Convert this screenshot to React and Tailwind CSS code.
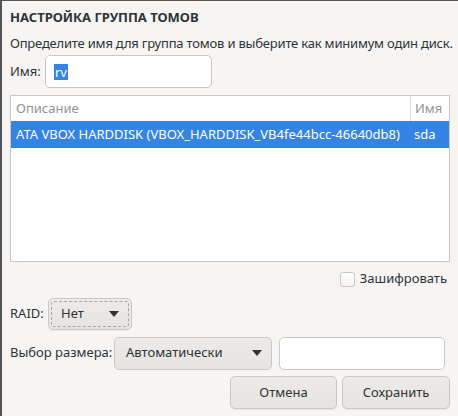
import React from "react";

const font = { fontFamily: '"Noto Sans", "Open Sans", sans-serif' };

function Arrow() {
  return (
    <svg width="10" height="6" viewBox="0 0 10 6" className="shrink-0">
      <path d="M0 0 L10 0 L5 6 Z" fill="#2e3436" />
    </svg>
  );
}

export default function App() {
  return (
    <div
      className="w-[458px] h-[416px] overflow-hidden bg-[#f6f5f4] border-l-2 border-t border-[#555555] text-[#2e3436] text-[13px]"
      style={font}
    >
      <div className="pl-[8px] pr-[8px] flex flex-col">
        <h1 className="mt-[6px] text-[13px] leading-[20px] font-bold whitespace-nowrap">
          НАСТРОЙКА ГРУППА ТОМОВ
        </h1>
        <p className="mt-[7px] leading-[18px] whitespace-nowrap tracking-[-0.2px]">
          Определите имя для группа томов и выберите как минимум один диск.
        </p>

        <div className="mt-[3px] flex items-center h-[33px]">
          <span className="w-[35px]">Имя:</span>
          <div className="w-[167px] h-[33px] rounded-[5px] border border-[#cdc7c2] bg-white flex items-center pl-[8px]">
            <span className="bg-[#3584e4] text-white leading-[16px] px-[1px]">rv</span>
          </div>
        </div>

        <div className="mt-[7px] w-[440px] h-[167px] border border-[#cdc7c2] bg-white flex flex-col">
          <div className="flex h-[25px] items-center text-[#919293]">
            <div className="flex-1 pl-[5px]">Описание</div>
            <div className="w-[39px] h-full border-l border-[#dcd8d5] flex items-center pl-[4px]">Имя</div>
          </div>
          <div className="flex h-[27px] items-center bg-[#3584e4] text-white">
            <div className="flex-1 pl-[5px] whitespace-nowrap">
              ATA VBOX HARDDISK (VBOX_HARDDISK_VB4fe44bcc-46640db8)
            </div>
            <div className="w-[39px] pl-[4px]">sda</div>
          </div>
        </div>

        <div className="mt-[8px] flex justify-end items-center h-[18px] pr-[3px]">
          <div className="w-[15px] h-[15px] rounded-[3px] border border-[#cdc7c2] bg-gradient-to-b from-white to-[#f4f3f2]" />
          <span className="ml-[5px] text-[13px]">Зашифровать</span>
        </div>

        <div className="mt-[9px] flex items-center h-[33px]">
          <span className="w-[38px]">RAID:</span>
          <div className="w-[84px] h-[32px] rounded-[5px] border border-[#cdc7c2] bg-gradient-to-b from-[#edebe9] to-[#e6e3e0] shadow-[0_1px_0_rgba(0,0,0,0.05)] p-[2px]">
            <div className="w-full h-full rounded-[3px] border border-dashed border-[#a9a7a4] flex items-center justify-between pl-[9px] pr-[9px]">
              <span>Нет</span>
              <Arrow />
            </div>
          </div>
        </div>

        <div className="mt-[6px] flex items-center h-[34px]">
          <span className="w-[104px]">Выбор размера:</span>
          <div className="w-[158px] h-[33px] rounded-[5px] border border-[#cdc7c2] bg-gradient-to-b from-[#edebe9] to-[#e6e3e0] flex items-center justify-between pl-[11px] pr-[9px]">
            <span>Автоматически</span>
            <Arrow />
          </div>
          <div className="ml-[7px] w-[166px] h-[33px] rounded-[5px] border border-[#cdc7c2] bg-white" />
        </div>

        <div className="mt-[6px] flex justify-end gap-[5px]">
          <button className="w-[107px] h-[33px] rounded-[5px] border border-[#cdc7c2] bg-gradient-to-b from-[#edebe9] to-[#e6e3e0] shadow-[0_1px_1px_rgba(0,0,0,0.07)] text-[13px]">
            Отмена
          </button>
          <button className="w-[108px] h-[33px] rounded-[5px] border border-[#cdc7c2] bg-gradient-to-b from-[#edebe9] to-[#e6e3e0] shadow-[0_1px_1px_rgba(0,0,0,0.07)] text-[13px]">
            Сохранить
          </button>
        </div>
      </div>
    </div>
  );
}
